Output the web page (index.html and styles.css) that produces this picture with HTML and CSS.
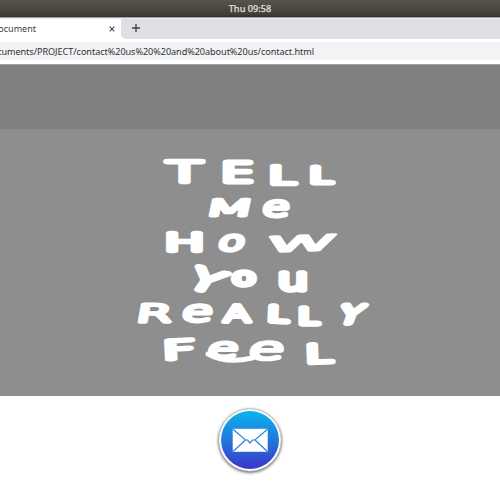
FILE: index.html
```html
<!DOCTYPE html>
<html lang="en">
<head>
<meta charset="utf-8">
<title>Document</title>
<link rel="stylesheet" href="styles.css">
</head>
<body>
<header class="system-bar"><time>Thu 09:58</time></header>
<div class="tab-strip">
  <div class="tab">
    <span class="tab-title">ocument</span>
    <svg class="close" viewBox="0 0 6 6"><path d="M.7 .7 5.3 5.3M5.3 .7 .7 5.3"/></svg>
  </div>
  <div class="tab-rest">
    <svg class="plus" viewBox="0 0 8 8"><path d="M4 0V8M0 4H8"/></svg>
  </div>
</div>
<div class="toolbar"><div class="address"><span>cuments/PROJECT/contact%20us%20%20and%20about%20us/contact.html</span></div></div>
<main>
  <div class="nav-band"></div>
  <section class="hero">
    <svg class="lettering" viewBox="0 129 500 267">
      <g>
        <text transform="translate(184.500 182) scale(2.9 1.4)">T</text>
        <text transform="translate(237.5 182) scale(2.6 1.34)">E</text>
        <text transform="translate(282 184) scale(2.4 1.2)">L</text>
        <text transform="translate(321 183) scale(2.05 1.03)">L</text>
      </g>
      <g>
        <text class="fine" transform="translate(228 215.5) skewX(-12) scale(2.9 1.15)">M</text>
        <text class="fine" transform="translate(275 216) skewX(-8) scale(2.2 1.35)">e</text>
      </g>
      <g>
        <text transform="translate(184.5 251) scale(2.7 1.25)">H</text>
        <text class="fine" transform="translate(230 249.500) skewX(-15) scale(2.15 1.3)">o</text>
        <text class="fine" transform="translate(301 251) rotate(-2) skewX(-14) scale(4.6 1.4)">w</text>
      </g>
      <g>
        <text transform="translate(200 290) rotate(14) skewX(-20) scale(2.6 1.55)">Y</text>
        <text transform="translate(244 285) scale(1.9 1.15)">o</text>
        <text transform="translate(293 290) scale(2.4 1.5)">u</text>
      </g>
      <g>
        <text class="fine" transform="translate(153 322) skewX(-10) scale(2.6 1.22)">R</text>
        <text class="fine" transform="translate(196 321) skewX(-10) scale(2.5 1.4)">e</text>
        <text class="fine" transform="translate(237 322) scale(2 1.12)">A</text>
        <text transform="translate(277.5 321.500) rotate(3) scale(1.8 1.05)">L</text>
        <text transform="translate(308.5 323.5) scale(1.8 1.05)">L</text>
        <text transform="translate(348.500 323) skewX(-20) scale(1.75 1.2)">Y</text>
      </g>
      <g>
        <text transform="translate(179.5 359) rotate(-3) scale(2.9 1.3)">F</text>
        <text class="fine" transform="translate(222 357) skewX(-10) scale(2.5 1.3)">e</text>
        <text class="fine" transform="translate(265 359) skewX(-10) scale(2.9 1.5)">e</text>
        <text transform="translate(319 362.500) rotate(-2) scale(2.4 1.25)">L</text>
        <path class="flourish" d="M208 354Q226 364 252 358"/>
      </g>
    </svg>
  </section>
  <footer>
    <svg class="mail" viewBox="0 0 72 72">
      <defs><linearGradient id="blue" x2="0" y2="1"><stop stop-color="#08b5ed"/><stop offset=".5" stop-color="#2377dc"/><stop offset="1" stop-color="#3d35cb"/></linearGradient></defs>
      <circle class="rim" cx="36" cy="36" r="31.2"/>
      <circle cx="36" cy="36" r="29" fill="url(#blue)"/>
      <rect x="18.700" y="24.800" width="35" height="23" fill="#fff"/>
      <path class="folds" d="M19 25.200 31.500 36 33.500 36 36 39 38.500 36 41 36 53.400 25.200M19 47.500 31.500 36M53.400 47.500 41 36"/>
    </svg>
  </footer>
</main>
</body>
</html>
```
FILE: styles.css
```css
* { box-sizing: border-box; }
body { margin: 0; height: 500px; overflow: hidden; background: #fff; font-family: "Noto Sans", sans-serif; color: #3c3d40; }
.system-bar { height: 18px; display: flex; justify-content: center; align-items: center; background: linear-gradient(#57544a, #3e3d37 15px, #30302b 17px, #a7a7a5 17px); color: #dfdbd2; font: 500 9.2px "Noto Sans", sans-serif; padding-bottom: 2px; }
.system-bar time { -webkit-text-stroke: .25px #dfdbd2; }
.tab-strip { height: 22px; display: flex; background: #fff; border-top: 1px solid #eaebf2; }
.tab { width: 121px; padding: 0 6px 0 0; display: flex; align-items: center; justify-content: space-between; border-radius: 0 4px 0 0; }
.tab-title { width: 36px; display: flex; justify-content: flex-end; font-size: 9px; white-space: nowrap; padding-bottom: 2px; }
.close { width: 6px; height: 6px; fill: none; stroke: #484a4d; stroke-width: 1.1; margin-bottom: 1px; }
.tab-rest { flex: 1; height: 20px; padding: 5px 11px; background: #dddfe5; border-radius: 0 0 0 5px; }
.plus { display: block; width: 8px; height: 8px; fill: none; stroke: #3e4044; stroke-width: 1.3; }
.toolbar { height: 25px; padding: 2px 0 4px; border-bottom: 1px solid #a3a3a3; }
.address { height: 18px; width: 100%; background: #f1f3f5; display: flex; align-items: center; }
.address span { width: 314px; display: flex; justify-content: flex-end; white-space: nowrap; font-size: 9.1px; letter-spacing: -.05px; color: #303134; }
.nav-band { height: 64px; background: #808080; }
.hero { height: 267px; background: #8e8e8e; }
.lettering { display: block; width: 500px; height: 267px; }
.lettering text { font: 200 20px "DejaVu Sans", sans-serif; text-anchor: middle; fill: #fff; stroke: #fff; stroke-width: 7.5px; stroke-linejoin: round; vector-effect: non-scaling-stroke; }
.lettering .fine { stroke-width: 5.8px; }
.flourish { fill: none; stroke: #fff; stroke-width: 5; stroke-linecap: round; }
footer { height: 104px; padding-top: 8px; display: flex; justify-content: center; }
.mail { width: 72px; height: 72px; overflow: visible; }
.rim { fill: #fff; stroke: #bdbdbd; stroke-width: .8; filter: drop-shadow(0 1px 1.5px #555); }
.folds { fill: none; stroke: #2b80dc; stroke-width: 1.2; }
```
